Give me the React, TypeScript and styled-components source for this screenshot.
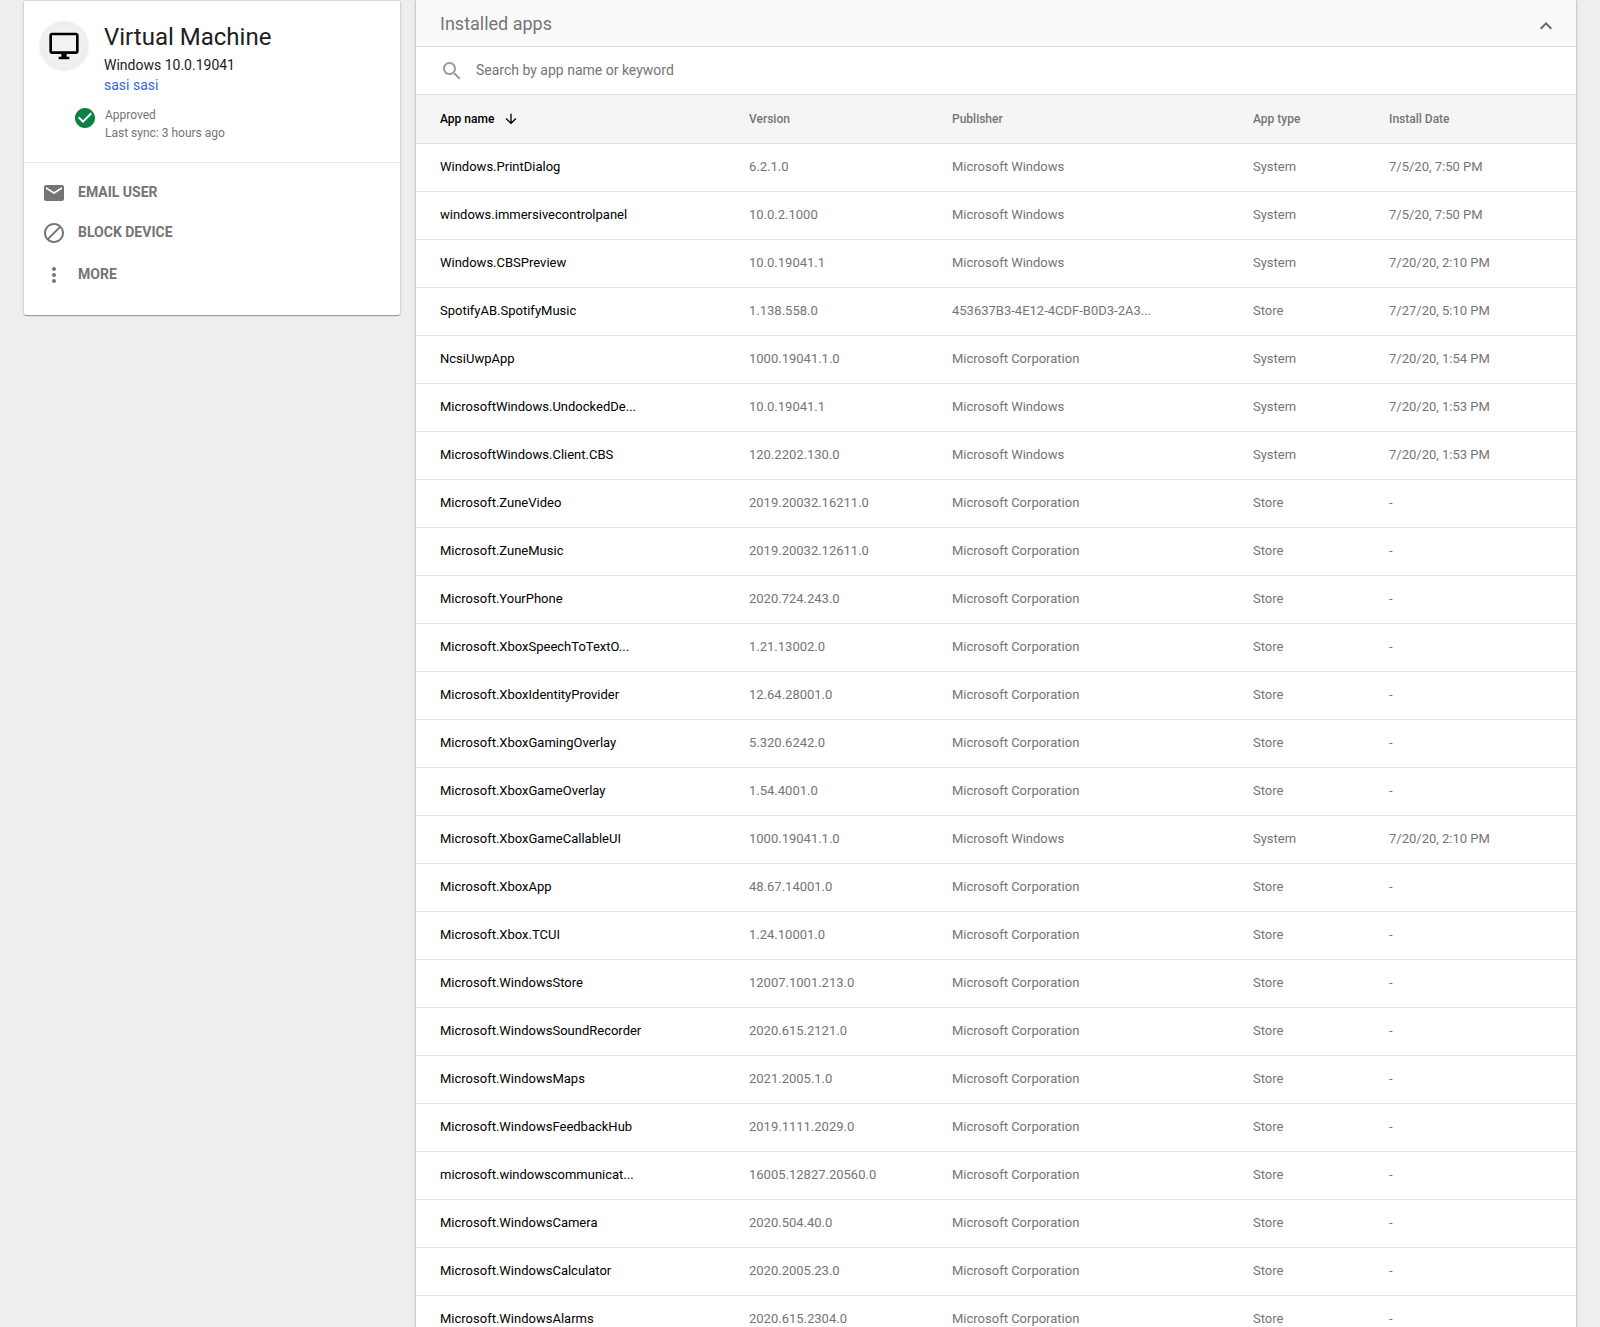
import React, { useState } from "react";
import styled, { createGlobalStyle } from "styled-components";

const GlobalStyle = createGlobalStyle`
  *, *::before, *::after { box-sizing: border-box; }
  body {
    margin: 0;
    background: #eee;
    color: #212121;
    font-family: Roboto, "Liberation Sans", Arial, sans-serif;
  }
  button, input { font-family: inherit; }
`;

const Page = styled.main`
  display: grid;
  grid-template-columns: minmax(240px, 376fr) minmax(0, 1160fr);
  gap: 16px;
  align-items: start;
  height: 100vh;
  padding: 0 24px;
  overflow: hidden;
`;

const shadow = "0 1px 1px rgba(0, 0, 0, 0.3), 0 0 3px rgba(0, 0, 0, 0.24)";

const DeviceCard = styled.aside`
  margin-top: 1px;
  background: #fff;
  border-radius: 2px;
  box-shadow: ${shadow};
`;

const Summary = styled.header`
  display: grid;
  grid-template-columns: 65px 1fr;
  padding: 20px 15px;
  border-bottom: 1px solid #e5e5e5;
`;

const Avatar = styled.div`
  display: flex;
  align-items: center;
  justify-content: center;
  width: 50px;
  height: 50px;
  border-radius: 50%;
  background: #efefef;
`;

const AvatarTile = styled.span`
  display: flex;
  align-items: center;
  justify-content: center;
  width: 32px;
  height: 32px;
  background: #f2f2f2;
`;

const DeviceName = styled.h1`
  margin: 0;
  font-size: 24px;
  font-weight: 400;
  line-height: 32px;
`;

const DeviceOs = styled.p`
  margin: 2px 0 0;
  font-size: 14px;
  line-height: 20px;
`;

const UserLink = styled.a`
  display: block;
  color: #3367d6;
  font-size: 14px;
  line-height: 20px;
  text-decoration: none;
`;

const Status = styled.div`
  display: flex;
  grid-column: 1 / -1;
  gap: 8px;
  margin-top: 11px;
  padding-left: 34px;
  color: #757575;
  font-size: 12px;
  line-height: 18px;
`;

const StatusText = styled.p`
  margin: 0;
`;

const Actions = styled.div`
  display: flex;
  flex-direction: column;
  padding: 10px 18px 18px;
`;

const ActionButton = styled.button<{ $tall?: boolean }>`
  display: flex;
  align-items: center;
  gap: 12px;
  height: ${(p) => (p.$tall ? 44 : 40)}px;
  padding: 0;
  border: 0;
  background: none;
  color: #757575;
  font-size: 14px;
  font-weight: 700;
  line-height: 20px;
  text-transform: uppercase;
  cursor: pointer;
`;

const ActionLabel = styled.span`
  padding-bottom: 2px;
`;

const Panel = styled.section`
  background: #fff;
  box-shadow: ${shadow};
`;

const PanelHeader = styled.header`
  display: flex;
  align-items: center;
  justify-content: space-between;
  height: 47px;
  padding: 2px 18px 0 24px;
  background: #fafafa;
  border-bottom: 1px solid #e0e0e0;
`;

const PanelTitle = styled.h2`
  margin: 0;
  color: #757575;
  font-size: 18px;
  font-weight: 400;
  line-height: 24px;
`;

const IconButton = styled.button`
  display: flex;
  margin-top: 4px;
  padding: 0;
  border: 0;
  background: none;
  color: #666;
  cursor: pointer;
`;

const SearchBar = styled.label`
  display: flex;
  align-items: center;
  gap: 12px;
  height: 48px;
  padding: 0 24px;
  border-bottom: 1px solid #e0e0e0;
  color: #9e9e9e;
`;

const SearchInput = styled.input`
  flex: 1;
  min-width: 0;
  padding: 0 0 2px;
  border: 0;
  outline: 0;
  color: #212121;
  font-size: 14px;
  line-height: 20px;
  &::placeholder { color: #757575; opacity: 1; }
`;

const Table = styled.table`
  width: 100%;
  table-layout: fixed;
  border-collapse: separate;
  border-spacing: 0;
`;

const Column = styled.col<{ $width: number }>`
  width: ${(p) => p.$width}px;
`;

const HeadCell = styled.th`
  height: 49px;
  padding: 0 0 0 24px;
  background: #f5f5f5;
  border-bottom: 1px solid #e0e0e0;
  color: #757575;
  font-size: 12px;
  font-weight: 500;
  text-align: left;
`;

const SortButton = styled.button`
  display: flex;
  align-items: center;
  gap: 9px;
  padding: 0;
  border: 0;
  background: none;
  color: #000;
  font-size: 12px;
  font-weight: 500;
  cursor: pointer;
`;

const Cell = styled.td<{ $strong?: boolean }>`
  height: 48px;
  padding: 0 0 2px 24px;
  overflow: hidden;
  border-bottom: 1px solid #e0e0e0;
  color: ${(p) => (p.$strong ? "#000" : "#757575")};
  font-size: 13px;
  line-height: 20px;
  white-space: nowrap;
`;

const Glyph = styled.svg`
  flex-shrink: 0;
`;

type IconProps = { path: string; size?: number; color?: string };

const Icon = ({ path, size = 24, color = "currentColor" }: IconProps) => (
  <Glyph width={size} height={size} viewBox="0 0 24 24" fill={color} aria-hidden="true">
    <path d={path} />
  </Glyph>
);

const icons = {
  monitor:
    "M21 2H3c-1.1 0-2 .9-2 2v12c0 1.1.9 2 2 2h7v2H8v2h8v-2h-2v-2h7c1.1 0 2-.9 2-2V4c0-1.1-.9-2-2-2zm0 14H3V4h18v12z",
  check:
    "M12 2C6.48 2 2 6.48 2 12s4.48 10 10 10 10-4.48 10-10S17.52 2 12 2zm-2 15l-5-5 1.41-1.41L10 14.17l7.59-7.59L19 8l-9 9z",
  mail: "M20 4H4c-1.1 0-1.99.9-1.99 2L2 18c0 1.1.9 2 2 2h16c1.1 0 2-.9 2-2V6c0-1.1-.9-2-2-2zm0 4l-8 5-8-5V6l8 5 8-5v2z",
  block:
    "M12 2C6.48 2 2 6.48 2 12s4.48 10 10 10 10-4.48 10-10S17.52 2 12 2zM4 12c0-4.42 3.58-8 8-8 1.85 0 3.55.63 4.9 1.69L5.69 16.9C4.63 15.55 4 13.85 4 12zm8 8c-1.85 0-3.55-.63-4.9-1.69L18.31 7.1C19.37 8.45 20 10.15 20 12c0 4.42-3.58 8-8 8z",
  more: "M12 8c1.1 0 2-.9 2-2s-.9-2-2-2-2 .9-2 2 .9 2 2 2zm0 2c-1.1 0-2 .9-2 2s.9 2 2 2 2-.9 2-2-.9-2-2-2zm0 6c-1.1 0-2 .9-2 2s.9 2 2 2 2-.9 2-2-.9-2-2-2z",
  search:
    "M15.5 14h-.79l-.28-.27C15.41 12.59 16 11.11 16 9.5 16 5.91 13.09 3 9.5 3S3 5.91 3 9.5 5.91 16 9.5 16c1.61 0 3.09-.59 4.23-1.57l.27.28v.79l5 4.99L20.49 19l-4.99-5zm-6 0C7.01 14 5 11.99 5 9.5S7.01 5 9.5 5 14 7.01 14 9.5 11.99 14 9.5 14z",
  collapse: "M12 8l-6 6 1.41 1.41L12 10.83l4.59 4.58L18 14z",
  down: "M20 12l-1.41-1.41L13 16.17V4h-2v12.17l-5.58-5.59L4 12l8 8 8-8z",
};

const MS = "Microsoft Corporation";
const WIN = "Microsoft Windows";

type AppRow = [name: string, version: string, publisher: string, type: string, date: string];

const apps: AppRow[] = [
  ["Windows.PrintDialog", "6.2.1.0", WIN, "System", "7/5/20, 7:50 PM"],
  ["windows.immersivecontrolpanel", "10.0.2.1000", WIN, "System", "7/5/20, 7:50 PM"],
  ["Windows.CBSPreview", "10.0.19041.1", WIN, "System", "7/20/20, 2:10 PM"],
  ["SpotifyAB.SpotifyMusic", "1.138.558.0", "453637B3-4E12-4CDF-B0D3-2A3...", "Store", "7/27/20, 5:10 PM"],
  ["NcsiUwpApp", "1000.19041.1.0", MS, "System", "7/20/20, 1:54 PM"],
  ["MicrosoftWindows.UndockedDe...", "10.0.19041.1", WIN, "System", "7/20/20, 1:53 PM"],
  ["MicrosoftWindows.Client.CBS", "120.2202.130.0", WIN, "System", "7/20/20, 1:53 PM"],
  ["Microsoft.ZuneVideo", "2019.20032.16211.0", MS, "Store", "-"],
  ["Microsoft.ZuneMusic", "2019.20032.12611.0", MS, "Store", "-"],
  ["Microsoft.YourPhone", "2020.724.243.0", MS, "Store", "-"],
  ["Microsoft.XboxSpeechToTextO...", "1.21.13002.0", MS, "Store", "-"],
  ["Microsoft.XboxIdentityProvider", "12.64.28001.0", MS, "Store", "-"],
  ["Microsoft.XboxGamingOverlay", "5.320.6242.0", MS, "Store", "-"],
  ["Microsoft.XboxGameOverlay", "1.54.4001.0", MS, "Store", "-"],
  ["Microsoft.XboxGameCallableUI", "1000.19041.1.0", WIN, "System", "7/20/20, 2:10 PM"],
  ["Microsoft.XboxApp", "48.67.14001.0", MS, "Store", "-"],
  ["Microsoft.Xbox.TCUI", "1.24.10001.0", MS, "Store", "-"],
  ["Microsoft.WindowsStore", "12007.1001.213.0", MS, "Store", "-"],
  ["Microsoft.WindowsSoundRecorder", "2020.615.2121.0", MS, "Store", "-"],
  ["Microsoft.WindowsMaps", "2021.2005.1.0", MS, "Store", "-"],
  ["Microsoft.WindowsFeedbackHub", "2019.1111.2029.0", MS, "Store", "-"],
  ["microsoft.windowscommunicat...", "16005.12827.20560.0", MS, "Store", "-"],
  ["Microsoft.WindowsCamera", "2020.504.40.0", MS, "Store", "-"],
  ["Microsoft.WindowsCalculator", "2020.2005.23.0", MS, "Store", "-"],
  ["Microsoft.WindowsAlarms", "2020.615.2304.0", MS, "Store", "-"],
];

const columnWidths = [309, 203, 301, 136, 211];

export default function App() {
  const [query, setQuery] = useState("");
  const visible = apps.filter((row) => row.join(" ").toLowerCase().includes(query.toLowerCase()));

  return (
    <>
      <GlobalStyle />
      <Page>
        <DeviceCard>
          <Summary>
            <Avatar>
              <AvatarTile>
                <Icon path={icons.monitor} size={32} color="#000" />
              </AvatarTile>
            </Avatar>
            <div>
              <DeviceName>Virtual Machine</DeviceName>
              <DeviceOs>Windows 10.0.19041</DeviceOs>
              <UserLink href="#user">sasi sasi</UserLink>
            </div>
            <Status>
              <Icon path={icons.check} color="#0b8043" />
              <div>
                <StatusText>Approved</StatusText>
                <StatusText>Last sync: 3 hours ago</StatusText>
              </div>
            </Status>
          </Summary>
          <Actions>
            <ActionButton type="button">
              <Icon path={icons.mail} />
              <ActionLabel>Email user</ActionLabel>
            </ActionButton>
            <ActionButton type="button">
              <Icon path={icons.block} />
              <ActionLabel>Block device</ActionLabel>
            </ActionButton>
            <ActionButton type="button" $tall>
              <Icon path={icons.more} />
              <ActionLabel>More</ActionLabel>
            </ActionButton>
          </Actions>
        </DeviceCard>

        <Panel>
          <PanelHeader>
            <PanelTitle>Installed apps</PanelTitle>
            <IconButton type="button" aria-label="Collapse installed apps">
              <Icon path={icons.collapse} />
            </IconButton>
          </PanelHeader>
          <SearchBar>
            <Icon path={icons.search} />
            <SearchInput
              type="text"
              aria-label="Search by app name or keyword"
              placeholder="Search by app name or keyword"
              value={query}
              onChange={(e) => setQuery(e.target.value)}
            />
          </SearchBar>
          <Table>
            <colgroup>
              {columnWidths.map((width, i) => (
                <Column key={i} $width={width} />
              ))}
            </colgroup>
            <thead>
              <tr>
                <HeadCell scope="col" aria-sort="descending">
                  <SortButton type="button">
                    App name
                    <Icon path={icons.down} size={16} />
                  </SortButton>
                </HeadCell>
                <HeadCell scope="col">Version</HeadCell>
                <HeadCell scope="col">Publisher</HeadCell>
                <HeadCell scope="col">App type</HeadCell>
                <HeadCell scope="col">Install Date</HeadCell>
              </tr>
            </thead>
            <tbody>
              {visible.map(([name, version, publisher, type, date]) => (
                <tr key={name}>
                  <Cell $strong>{name}</Cell>
                  <Cell>{version}</Cell>
                  <Cell>{publisher}</Cell>
                  <Cell>{type}</Cell>
                  <Cell>{date}</Cell>
                </tr>
              ))}
            </tbody>
          </Table>
        </Panel>
      </Page>
    </>
  );
}
